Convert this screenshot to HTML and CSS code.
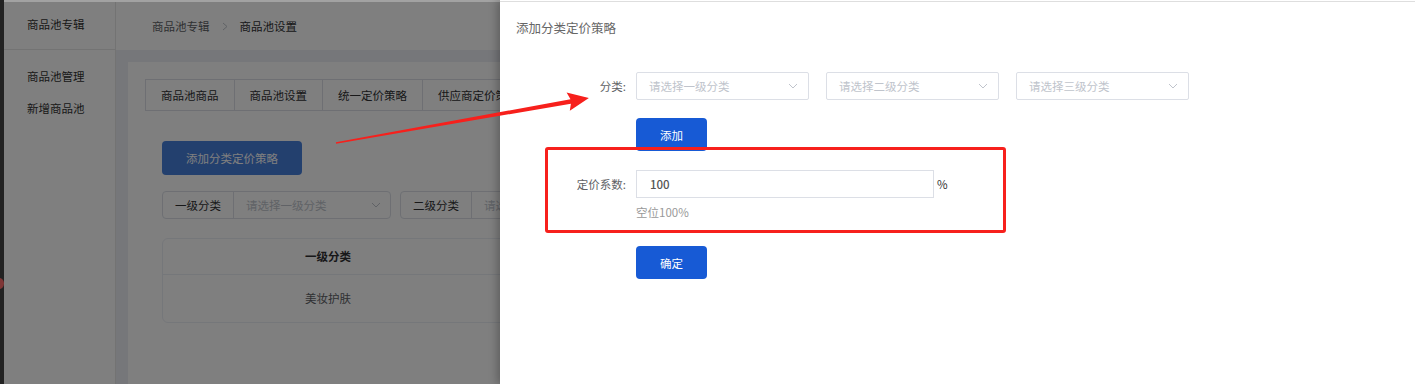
FILE: index.html
```html
<!DOCTYPE html>
<html lang="zh-CN">
<head>
<meta charset="utf-8">
<title>商品池设置</title>
<link rel="stylesheet" href="styles.css">
</head>
<body>
<div class="screen">
  <div class="edge"><span class="edge-dot"></span></div>
  <div class="app">
    <aside class="sidebar">
      <div class="side-head">商品池专辑</div>
      <nav class="side-menu">
        <div class="side-item">商品池管理</div>
        <div class="side-item">新增商品池</div>
      </nav>
    </aside>
    <main class="main">
      <header class="topbar">
        <span class="crumb">商品池专辑</span>
        <svg class="crumb-sep" width="6" height="9" viewBox="0 0 6 9"><polyline points="1,1 5,4.5 1,8" fill="none" stroke="#c0c4cc" stroke-width="1"/></svg>
        <span class="crumb crumb-current">商品池设置</span>
      </header>
      <section class="main-body">
        <div class="card">
          <div class="tabs">
            <div class="tab">商品池商品</div>
            <div class="tab">商品池设置</div>
            <div class="tab">统一定价策略</div>
            <div class="tab">供应商定价策略</div>
          </div>
          <div class="pane">
            <button class="btn-strategy">添加分类定价策略</button>
            <div class="filters">
              <div class="filter">
                <span class="filter-label">一级分类</span>
                <span class="filter-select">请选择一级分类<svg class="chev" width="10" height="6" viewBox="0 0 10 6"><polyline points="1,1 5,5 9,1" fill="none" stroke="#c0c4cc" stroke-width="1"/></svg></span>
              </div>
              <div class="filter">
                <span class="filter-label">二级分类</span>
                <span class="filter-select">请选择二级分类<svg class="chev" width="10" height="6" viewBox="0 0 10 6"><polyline points="1,1 5,5 9,1" fill="none" stroke="#c0c4cc" stroke-width="1"/></svg></span>
              </div>
            </div>
            <div class="table">
              <div class="trow thead">
                <div class="th">一级分类</div>
                <div class="th"></div>
                <div class="th"></div>
              </div>
              <div class="trow">
                <div class="td">美妆护肤</div>
                <div class="td"></div>
                <div class="td"></div>
              </div>
            </div>
          </div>
        </div>
      </section>
    </main>
  </div>
  <div class="mask"></div>
  <div class="screen-topline"></div>

  <aside class="drawer">
    <div class="drawer-topline"></div>
    <div class="drawer-title">添加分类定价策略</div>
    <div class="form">
      <div class="form-row">
        <label class="form-label">分类:</label>
        <div class="selects">
          <div class="select">请选择一级分类<svg class="chev" width="10" height="6" viewBox="0 0 10 6"><polyline points="1,1 5,5 9,1" fill="none" stroke="#c0c4cc" stroke-width="1"/></svg></div>
          <div class="select">请选择二级分类<svg class="chev" width="10" height="6" viewBox="0 0 10 6"><polyline points="1,1 5,5 9,1" fill="none" stroke="#c0c4cc" stroke-width="1"/></svg></div>
          <div class="select">请选择三级分类<svg class="chev" width="10" height="6" viewBox="0 0 10 6"><polyline points="1,1 5,5 9,1" fill="none" stroke="#c0c4cc" stroke-width="1"/></svg></div>
        </div>
      </div>
      <div class="form-offset row-add">
        <button class="btn-primary">添加</button>
      </div>
      <div class="form-row row-ratio">
        <label class="form-label">定价系数:</label>
        <div class="input">100</div>
        <span class="unit">%</span>
      </div>
      <div class="form-offset hint">空位100%</div>
      <div class="form-offset row-submit">
        <button class="btn-primary">确定</button>
      </div>
    </div>
  </aside>

  <svg class="annot-arrow" width="1415" height="384" viewBox="0 0 1415 384">
    <polygon points="335.9,142.2 570.5,99.3 566.6,92.6 588.9,98 569.8,110.8 570.9,103.7 336.1,143.8" fill="#f7201c"/>
  </svg>
  <div class="annot-box"></div>
</div>
</body>
</html>
```

FILE: styles.css
```css
* {
  box-sizing: border-box;
  margin: 0;
  padding: 0;
}

html,
body {
  width: 1415px;
  height: 384px;
  overflow: hidden;
}

body {
  font-family: "Noto Sans CJK SC", "Liberation Sans", sans-serif;
  font-size: 11.5px;
  color: #333;
  background: #fff;
}

.screen {
  position: relative;
  display: flex;
  width: 1415px;
  height: 384px;
  overflow: hidden;
}

/* left dark edge */
.edge {
  position: relative;
  width: 4px;
  flex: none;
  background: #444;
}

.edge-dot {
  position: absolute;
  left: -6px;
  top: 278px;
  width: 10px;
  height: 11px;
  border-radius: 50%;
  background: #ff6c6c;
}

/* background page */
.app {
  flex: 1;
  display: flex;
  min-width: 0;
}

.sidebar {
  width: 112px;
  flex: none;
  background: #fff;
  border-right: 1px solid #e6e6e6;
}

.side-head {
  height: 50px;
  line-height: 49px;
  padding-left: 23px;
  border-bottom: 1px solid #e6e6e6;
  color: #333;
}

.side-menu {
  padding-top: 10px;
}

.side-item {
  height: 32px;
  line-height: 32px;
  padding-left: 23px;
  color: #333;
}

.main {
  flex: 1;
  display: flex;
  flex-direction: column;
  min-width: 0;
}

.topbar {
  height: 50px;
  flex: none;
  display: flex;
  align-items: center;
  gap: 12px;
  padding: 2px 0 0 36px;
  background: #fff;
}

.crumb {
  color: #606266;
  line-height: 16px;
}

.crumb-current {
  color: #303133;
}

.main-body {
  flex: 1;
  display: flex;
  padding: 12px 0 0 12px;
  background: #eceef4;
}

.card {
  flex: 1;
  background: #fff;
  padding: 17px;
}

.tabs {
  display: inline-flex;
  height: 32px;
  border: 1px solid #dcdfe6;
}

.tab {
  padding: 0 15px;
  line-height: 30px;
  color: #303133;
  white-space: nowrap;
}

.tab + .tab {
  border-left: 1px solid #dcdfe6;
}

.pane {
  padding-left: 17px;
}

.btn-strategy {
  display: block;
  margin-top: 30px;
  width: 140px;
  height: 34px;
  border: none;
  border-radius: 4px;
  background: #4680dc;
  color: #fff;
  font-family: inherit;
  font-size: 11.5px;
}

.filters {
  display: flex;
  gap: 9px;
  margin-top: 16px;
}

.filter {
  display: flex;
  height: 28px;
  border: 1px solid #dcdfe6;
  border-radius: 4px;
}

.filter-label {
  width: 71px;
  line-height: 26px;
  text-align: center;
  color: #303133;
  border-right: 1px solid #dcdfe6;
}

.filter-select {
  width: 156px;
  display: flex;
  align-items: center;
  justify-content: space-between;
  padding: 0 9px 0 12px;
  color: #c0c4cc;
}

.table {
  margin-top: 19px;
  border: 1px solid #ebeef5;
  border-radius: 6px;
}

.trow {
  display: grid;
  grid-template-columns: 330px 330px 1fr;
}

.th {
  height: 36px;
  line-height: 35px;
  text-align: center;
  font-weight: bold;
  color: #303133;
  border-bottom: 1px solid #ebeef5;
}

.td {
  height: 47px;
  line-height: 47px;
  text-align: center;
  color: #606266;
}

/* modal mask */
.mask {
  position: absolute;
  inset: 0;
  background: rgba(0, 0, 0, 0.5);
}

.screen-topline {
  position: absolute;
  left: 4px;
  top: 0;
  width: 496px;
  height: 2px;
  background: #a2a2a2;
}

/* drawer */
.drawer {
  position: absolute;
  top: 0;
  right: 0;
  width: 915px;
  height: 384px;
  padding-top: 1px;
  background: #fff;
  box-shadow: -3px 0 8px rgba(0, 0, 0, 0.25);
}

.drawer-topline {
  height: 1px;
  background: #dedede;
}

.drawer-title {
  margin-top: 18px;
  padding-left: 16px;
  font-size: 12.5px;
  line-height: 16px;
  color: #666;
}

.form {
  padding-top: 36px;
}

.form-row {
  display: flex;
  align-items: center;
}

.form-label {
  width: 136px;
  flex: none;
  padding-right: 10px;
  text-align: right;
  color: #606266;
}

.selects {
  display: flex;
  gap: 17px;
}

.select {
  width: 173px;
  height: 28px;
  display: flex;
  align-items: center;
  justify-content: space-between;
  padding: 0 10px 0 12px;
  border: 1px solid #dcdfe6;
  border-radius: 2px;
  color: #c0c4cc;
}

.form-offset {
  padding-left: 136px;
}

.btn-primary {
  display: block;
  width: 71px;
  height: 33px;
  border: none;
  border-radius: 4px;
  background: #175ad5;
  color: #fff;
  font-family: inherit;
  font-size: 11.5px;
}

.row-add {
  margin-top: 18px;
}

.row-ratio {
  margin-top: 19px;
}

.input {
  width: 298px;
  height: 28px;
  line-height: 26px;
  padding-left: 13px;
  border: 1px solid #dcdfe6;
  color: #555;
  font-weight: 500;
}

.unit {
  margin-left: 3px;
  color: #333;
}

.hint {
  margin-top: 6px;
  line-height: 16px;
  color: #999;
}

.row-submit {
  margin-top: 26px;
}

/* annotations */
.annot-arrow {
  position: absolute;
  left: 0;
  top: 0;
  pointer-events: none;
}

.annot-box {
  position: absolute;
  left: 545px;
  top: 147px;
  width: 461px;
  height: 86px;
  border: 3px solid #f7201c;
  border-radius: 3px;
  pointer-events: none;
}
```
